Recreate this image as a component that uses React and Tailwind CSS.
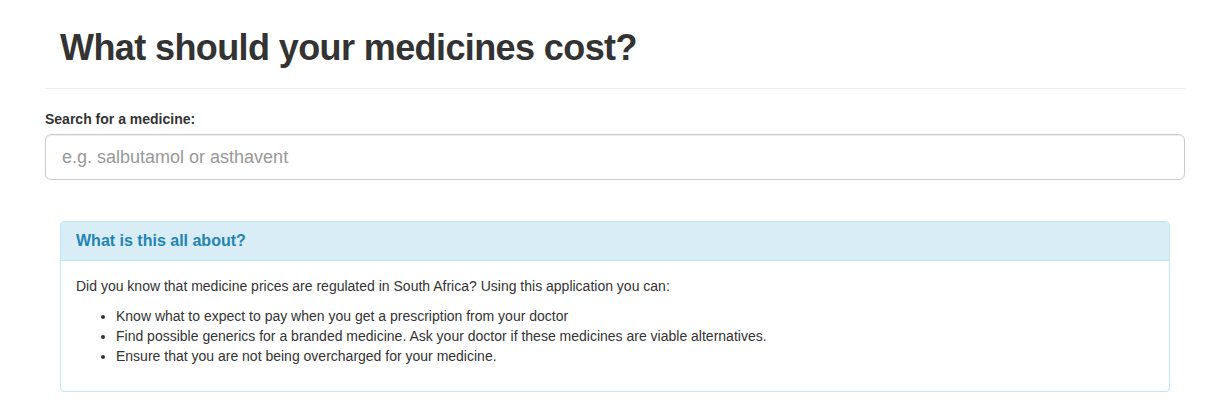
import React from 'react';

const features = [
  'Know what to expect to pay when you get a prescription from your doctor',
  'Find possible generics for a branded medicine. Ask your doctor if these medicines are viable alternatives.',
  'Ensure that you are not being overcharged for your medicine.',
];

const App = () => {
  return (
    <div className="min-h-screen bg-white text-[#333] font-['Liberation_Sans',Arial,sans-serif] text-[14px] leading-[20px]">
      <div className="ml-[45px] w-[1140px]">
        {/* Page header */}
        <div className="pt-[28px] pb-[20px] border-b border-[#eee]">
          <h1 className="pl-[15px] text-[36px] leading-[40px] font-bold tracking-[-0.6px] text-[#333]">
            What should your medicines cost?
          </h1>
        </div>

        {/* Search */}
        <div className="pt-[20px]">
          <label htmlFor="search" className="block mb-[5px] font-bold text-[14px] leading-[20px]">
            Search for a medicine:
          </label>
          <input
            id="search"
            type="text"
            placeholder="e.g. salbutamol or asthavent"
            className="block w-full h-[46px] px-[16px] text-[18px] border border-[#ccc] rounded-[6px] placeholder:text-[#999] shadow-[inset_0_1px_1px_rgba(0,0,0,0.075)] outline-none"
          />
        </div>

        {/* Info panel */}
        <div className="px-[15px] pt-[41px]">
          <div className="border border-[#bce8f1] rounded-[4px] bg-white">
            <div className="px-[15px] py-[10px] bg-[#d9edf7] border-b border-[#bce8f1] rounded-t-[3px]">
              <h3 className="text-[16px] leading-[17.6px] font-bold text-[#2284b5]">What is this all about?</h3>
            </div>
            <div className="p-[15px]">
              <p className="mb-[10px]">
                Did you know that medicine prices are regulated in South Africa? Using this application you can:
              </p>
              <ul className="list-disc pl-[40px] mb-[10px]">
                {features.map((f) => (
                  <li key={f}>{f}</li>
                ))}
              </ul>
            </div>
          </div>
        </div>
      </div>
    </div>
  );
};

export default App;
